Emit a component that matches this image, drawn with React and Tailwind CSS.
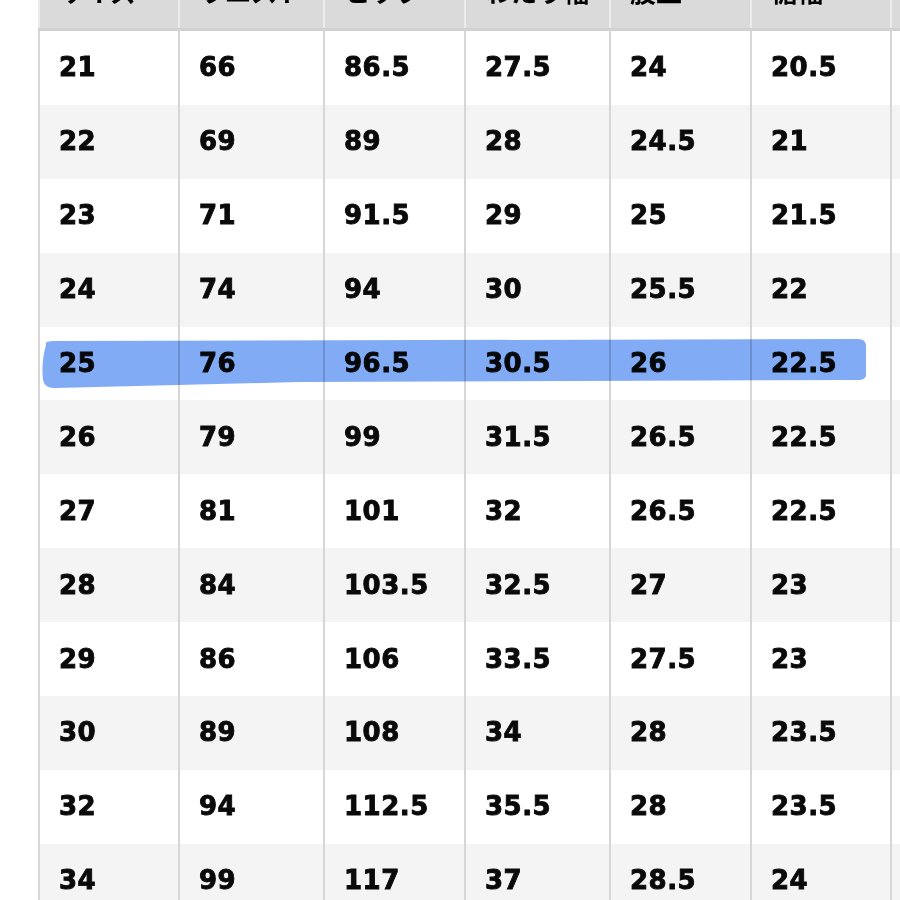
import React from "react";

const headers = ["サイズ", "ウエスト", "ヒップ", "わたり幅", "股上", "裾幅", ""];

const rows = [
  ["21", "66", "86.5", "27.5", "24", "20.5"],
  ["22", "69", "89", "28", "24.5", "21"],
  ["23", "71", "91.5", "29", "25", "21.5"],
  ["24", "74", "94", "30", "25.5", "22"],
  ["25", "76", "96.5", "30.5", "26", "22.5"],
  ["26", "79", "99", "31.5", "26.5", "22.5"],
  ["27", "81", "101", "32", "26.5", "22.5"],
  ["28", "84", "103.5", "32.5", "27", "23"],
  ["29", "86", "106", "33.5", "27.5", "23"],
  ["30", "89", "108", "34", "28", "23.5"],
  ["32", "94", "112.5", "35.5", "28", "23.5"],
  ["34", "99", "117", "37", "28.5", "24"],
];

const cols =
  "grid grid-cols-[140px_145px_141px_145px_141px_140px_120px]";

function App() {
  return (
    <div className="relative w-[900px] h-[900px] overflow-hidden bg-white">
      <div className="ml-[38px] -mt-[43px] w-[1000px]">
        {/* header, mostly scrolled off the top */}
        <div
          className={`${cols} h-[74px] bg-[#dadada] border-b-[3px] border-[#d0d0d0]`}
        >
          {headers.map((h, i) => (
            <div
              key={i}
              className="flex items-center pl-[19px] border-l-2 border-[#ececec] text-[26px] font-bold text-black"
              style={{ fontFamily: '"Noto Sans CJK JP", "Noto Sans", sans-serif' }}
            >
              <span className="-translate-y-[2px]">{h}</span>
            </div>
          ))}
        </div>

        {rows.map((r, ri) => (
          <div
            key={ri}
            className={`${cols} h-[73.9px] ${ri % 2 === 1 ? "bg-[#f4f4f4]" : "bg-white"}`}
          >
            {[...r, ""].map((v, ci) => (
              <div
                key={ci}
                className="flex items-center pl-[19px] border-l-2 border-[#d6d6d6] text-[26px] font-bold text-[#0a0a0a] [-webkit-text-stroke:0.9px_#0a0a0a] tracking-[0.5px]"
                style={{ fontFamily: '"DejaVu Sans", sans-serif' }}
              >
                <span>{v}</span>
              </div>
            ))}
          </div>
        ))}
      </div>

      {/* highlighter mark */}
      <svg
        className="absolute inset-0 pointer-events-none mix-blend-multiply"
        width="900"
        height="900"
        viewBox="0 0 900 900"
      >
        <path
          d="M46 345 Q44 341 54 341 L858 339 Q866 339 866 346 L866 375 Q866 380 858 380 L300 382 L56 388 Q45 389 43 380 Q41 362 46 345 Z"
          fill="#82abf5"
          style={{ filter: "blur(0.6px)" }}
        />
      </svg>
    </div>
  );
}

export default App;
